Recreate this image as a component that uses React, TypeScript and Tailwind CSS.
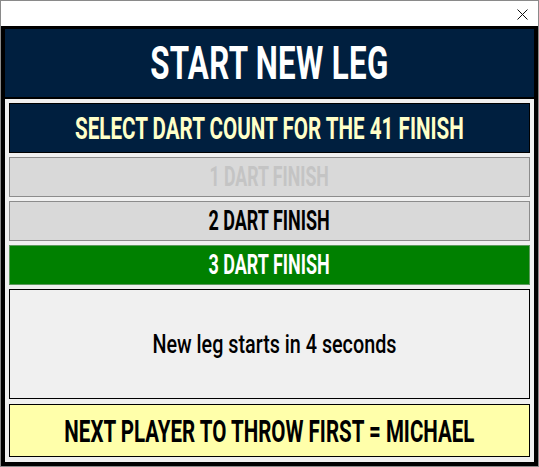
import React from "react";

const F = { fontFamily: "Roboto, 'Liberation Sans', sans-serif" };

function Cond({ children, className }: { children: React.ReactNode; className: string }) {
  return (
    <span className={"inline-block whitespace-nowrap origin-center " + className}>{children}</span>
  );
}

export default function App() {
  return (
    <div
      className="w-[539px] h-[467px] border border-[#8a8a8a] bg-white flex flex-col overflow-hidden"
      style={F}
    >
      <div className="h-[25px] bg-white flex items-center justify-end pr-[10px]">
        <svg width="11" height="11" viewBox="0 0 11 11" className="mt-[1px]">
          <path d="M0.5 0.5 L10.5 10.5 M10.5 0.5 L0.5 10.5" stroke="#111" strokeWidth="1" fill="none" />
        </svg>
      </div>
      <div className="flex-1 bg-black pt-[3px] pb-[4px] px-[4px] flex flex-col">
        <div className="h-[68px] bg-[#001f3f] flex items-center justify-center">
          <Cond className="text-[46px] font-bold text-white leading-none scale-x-[0.68] tracking-[0.5px]">START NEW LEG</Cond>
        </div>
        <div className="mt-[2px] flex-1 bg-[#f0f0f0] px-[4px] pt-[4px] pb-[5px] flex flex-col">
          <div className="h-[50px] bg-[#001f3f] border border-black flex items-center justify-center">
            <Cond className="text-[31px] font-bold text-[#ffffc8] leading-none scale-x-[0.665]">SELECT DART COUNT FOR THE 41 FINISH</Cond>
          </div>
          <div className="mt-[4px] h-[40px] bg-[#d9d9d9] border border-[#8c8c8c] flex items-center justify-center">
            <Cond className="text-[27px] font-bold text-[#c4c4c4] leading-none scale-x-[0.655]">1 DART FINISH</Cond>
          </div>
          <div className="mt-[4px] h-[40px] bg-[#d9d9d9] border border-[#8c8c8c] flex items-center justify-center">
            <Cond className="text-[27px] font-bold text-black leading-none scale-x-[0.665]">2 DART FINISH</Cond>
          </div>
          <div className="mt-[4px] h-[40px] bg-[#008000] border border-[#5f9a5f] flex items-center justify-center">
            <Cond className="text-[27px] font-bold text-white leading-none scale-x-[0.665]">3 DART FINISH</Cond>
          </div>
          <div className="mt-[4px] h-[110px] bg-[#f0f0f0] border border-black flex items-center justify-center pl-[10px]">
            <Cond className="text-[25px] font-medium text-black leading-none scale-x-[0.79]">New leg starts in 4 seconds</Cond>
          </div>
          <div className="mt-[5px] h-[53px] bg-[#ffffaa] border border-black flex items-center justify-center">
            <Cond className="text-[32px] font-bold text-black leading-none scale-x-[0.642]">NEXT PLAYER TO THROW FIRST = MICHAEL</Cond>
          </div>
        </div>
      </div>
    </div>
  );
}
